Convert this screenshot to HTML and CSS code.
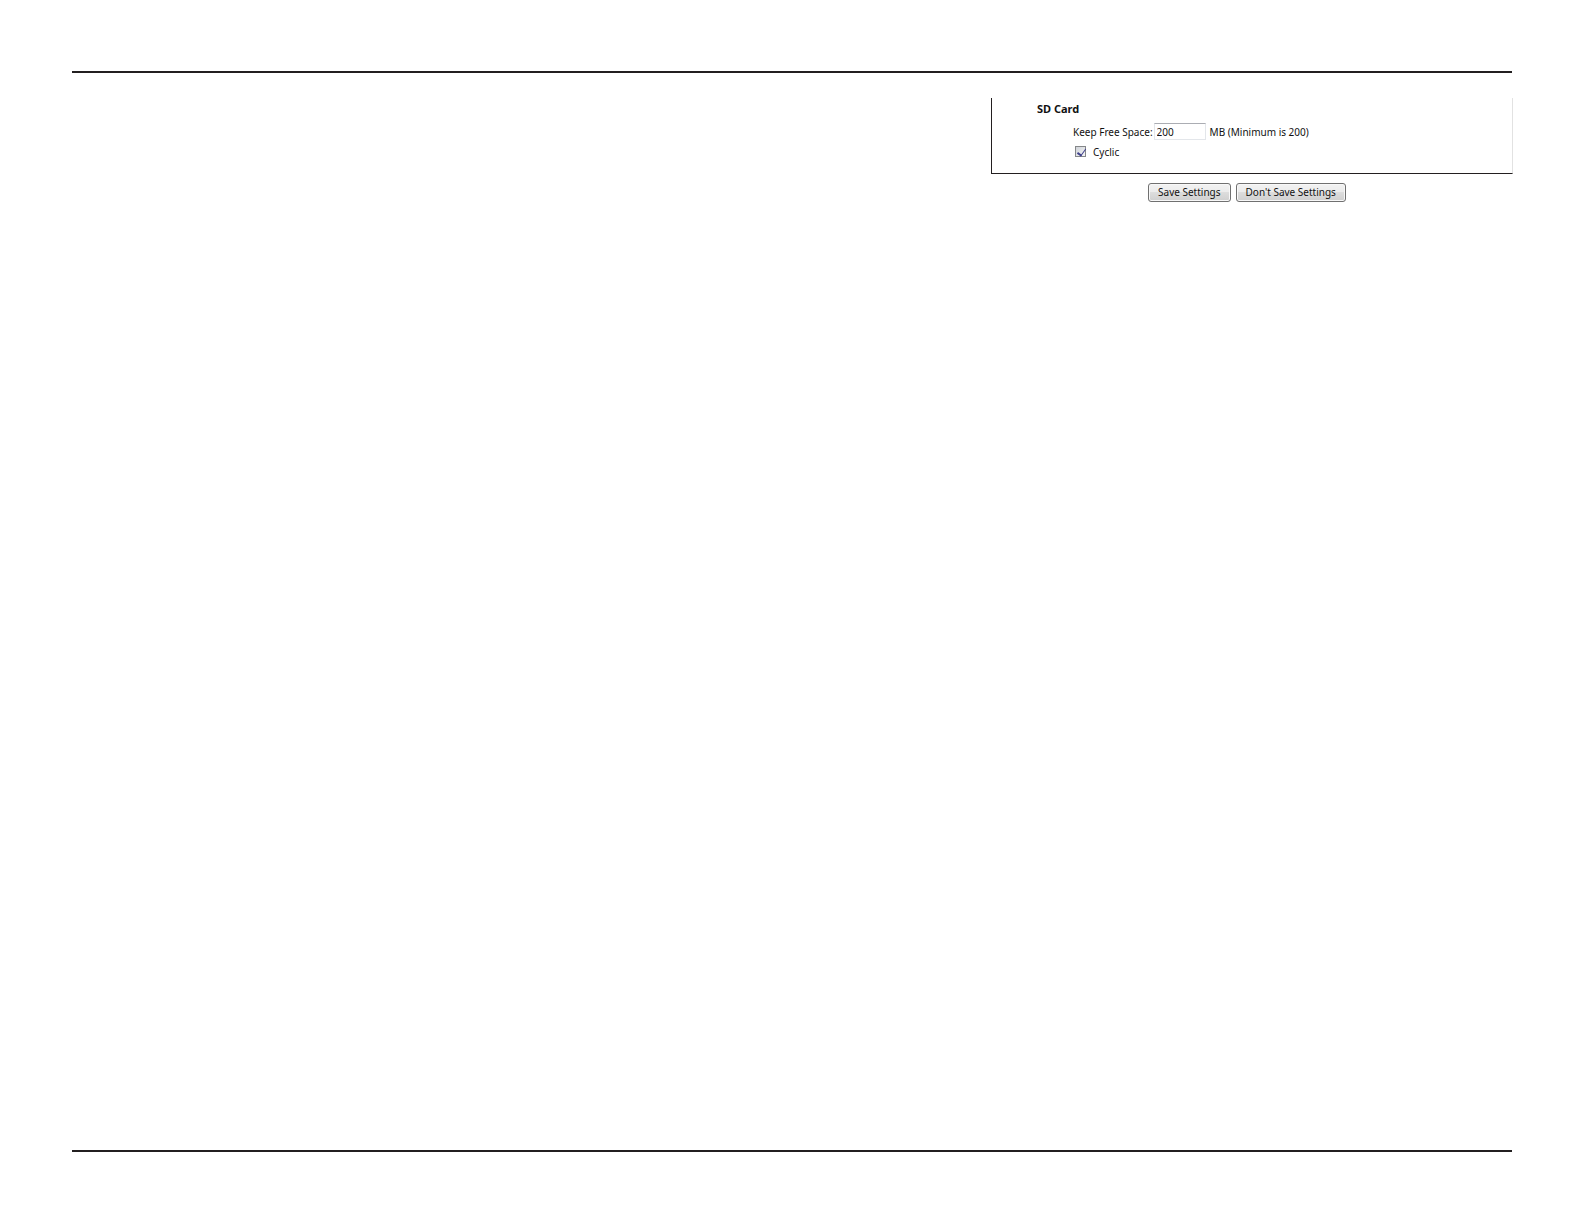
FILE: index.html
```
<!DOCTYPE html>
<html lang="en">
  <head>
    <meta charset="UTF-8" />
    <meta name="viewport" content="width=device-width, initial-scale=1.0" />
    <title>SD Card Settings</title>
    <link rel="stylesheet" href="styles.css" />
  </head>
  <body>
    <main class="page">
      <form class="settings">
        <!-- SD card recording options -->
        <section class="panel">
          <h2>SD Card</h2>
          <div class="row">
            <label for="freeSpace">Keep Free Space:</label>
            <input type="text" id="freeSpace" name="freeSpace" value="200" />
            <span class="unit">MB (Minimum is 200)</span>
          </div>
          <div class="row cyclic">
            <input type="checkbox" id="cyclic" name="cyclic" checked />
            <label for="cyclic">Cyclic</label>
          </div>
        </section>

        <div class="actions">
          <button type="submit">Save Settings</button>
          <button type="reset">Don't Save Settings</button>
        </div>
      </form>
    </main>
  </body>
</html>
```
FILE: styles.css
```
* {
  margin: 0;
  padding: 0;
  box-sizing: border-box;
}

body {
  display: flex;
  min-height: 100vh;
  padding: 71px 72px 72px;
  background-color: #fff;
  color: #111;
  font-family: "Noto Sans", Tahoma, sans-serif;
  font-size: 10px;
  line-height: 16px;
}

.page {
  flex: 1;
  display: grid;
  grid-template-columns: 919fr 521fr;
  align-items: start;
  padding-top: 25px;
  border-top: 2px solid #231f20;
  border-bottom: 2px solid #231f20;
}

.settings {
  grid-column: 2;
}

/* Panel */
.panel {
  margin-right: -1px;
  padding: 3px 0 13px 45px;
  border-left: 1px solid #231f20;
  border-right: 1px solid #e2e2e2;
  border-bottom: 1px solid #231f20;
}

h2 {
  font-size: 11px;
  line-height: 16px;
}

.row {
  display: flex;
  align-items: center;
  margin-top: 6px;
  padding-left: 36px;
}

input[type="text"] {
  width: 52px;
  height: 17px;
  margin-left: 1px;
  padding: 0 2px;
  border: 1px solid #e3e6ea;
  border-top-color: #abadb3;
  font: inherit;
  color: inherit;
}

.unit {
  margin-left: 4px;
}

.cyclic {
  align-items: flex-start;
  gap: 7px;
  margin-top: 4px;
  padding-left: 38px;
}

input[type="checkbox"] {
  appearance: none;
  width: 11px;
  height: 11px;
  margin-top: 2px;
  border: 1px solid #858789;
  background: linear-gradient(135deg, #cfd3d9, #f6f6f6);
}

input[type="checkbox"]:checked::after {
  content: "";
  display: block;
  width: 4px;
  height: 7px;
  margin-left: 3px;
  border: solid #41428c;
  border-width: 0 1px 2px 0;
  transform: rotate(35deg);
}

/* Buttons */
.actions {
  display: flex;
  justify-content: center;
  gap: 5px;
  margin-top: 9px;
  padding-right: 9px;
}

button {
  height: 19px;
  padding: 0 9px;
  border: 1px solid #707070;
  border-radius: 3px;
  background: linear-gradient(#f2f2f2, #ebebeb 50%, #dddddd 50%, #cfcfcf);
  box-shadow: inset 0 0 0 1px #f8f8f8;
  color: #111;
  font: inherit;
  line-height: 17px;
  cursor: pointer;
}
```
